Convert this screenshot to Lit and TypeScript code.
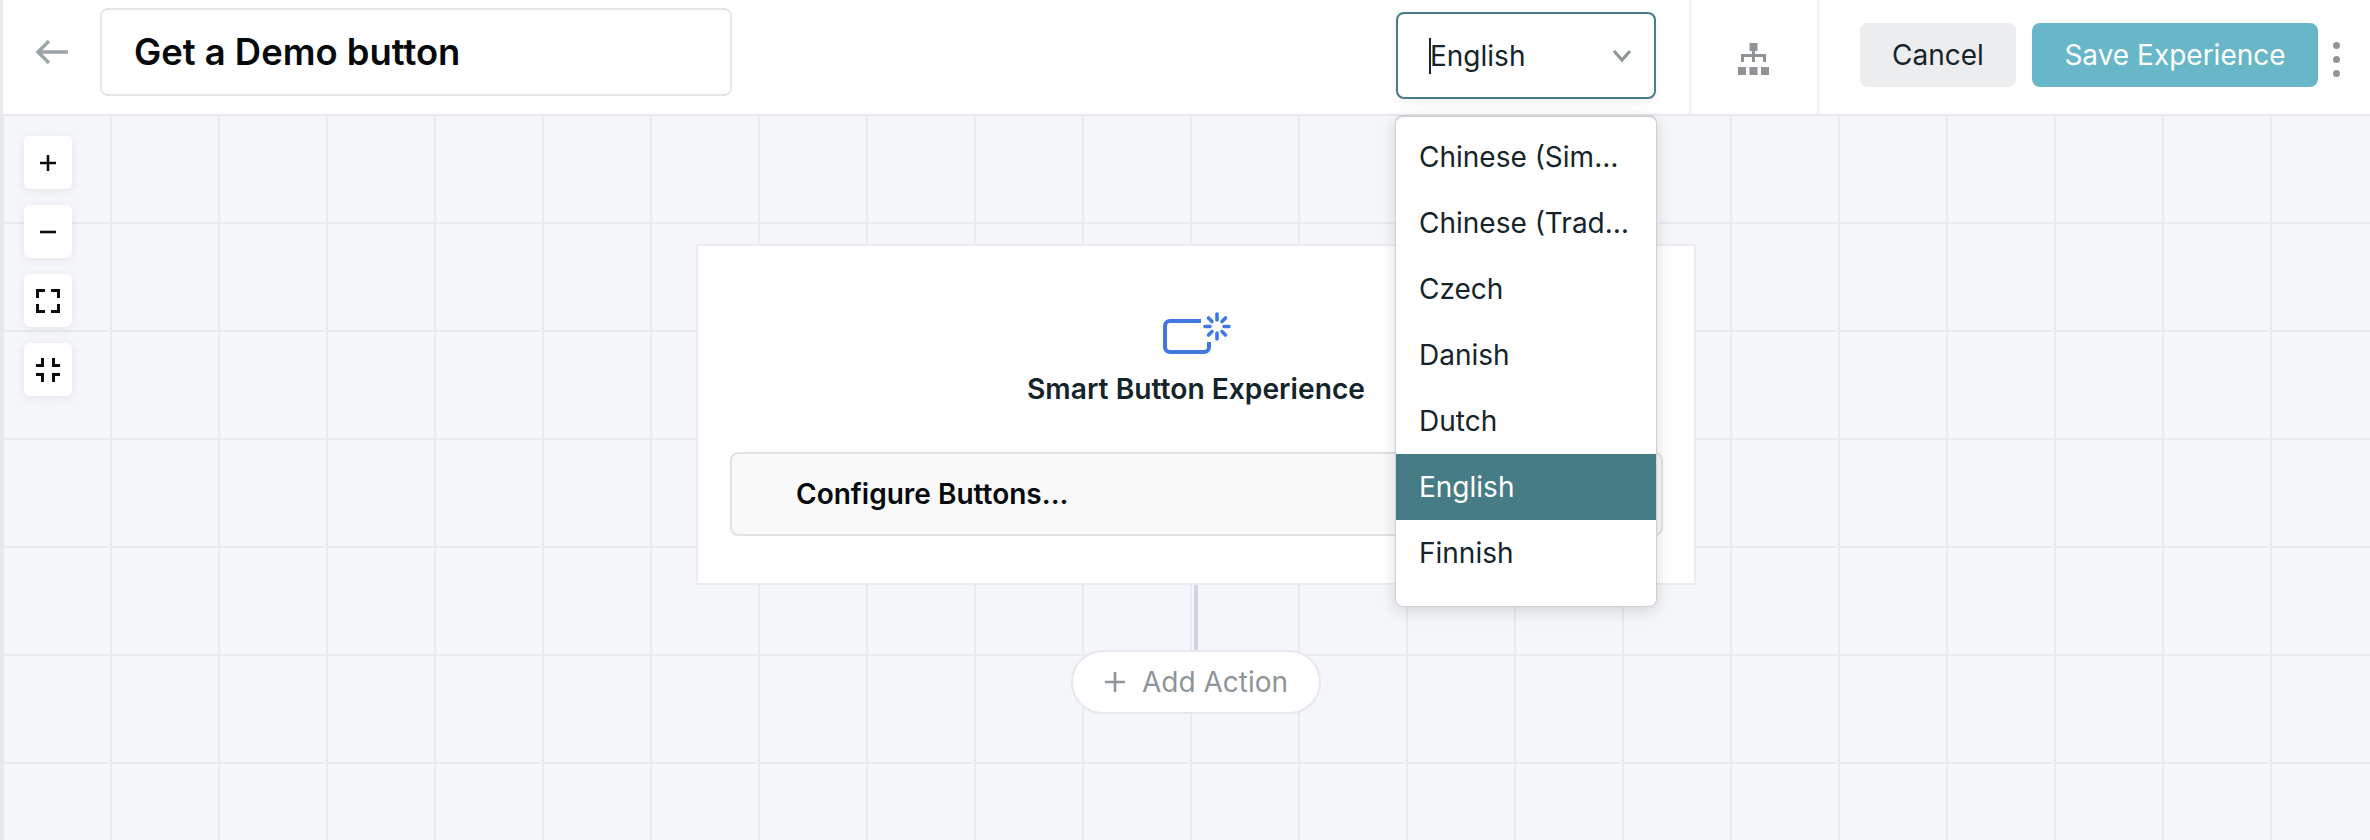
import { LitElement, html, css } from "lit";
import { customElement } from "lit/decorators.js";

const LANGS = ["Chinese (Simplified)", "Chinese (Traditional)", "Czech", "Danish", "Dutch", "English", "Finnish"];

@customElement("app-root")
export class AppRoot extends LitElement {
  static styles = css`
    :host { display: block; height: 840px; font-family: Inter, "Liberation Sans", sans-serif; color: #15242b; overflow: hidden; }
    * { box-sizing: border-box; }
    .page { position: relative; display: flex; flex-direction: column; height: 840px; border-left: 3px solid #e8e9ee; }
    .header { display: flex; align-items: stretch; height: 116px; flex: none; background: #fff; border-bottom: 2px solid #e8e9ee; }
    .left { display: flex; align-items: flex-start; flex: 1; padding-top: 8px; }
    .back { width: 97px; height: 88px; display: flex; align-items: center; padding-left: 32px; }
    .title { width: 632px; height: 88px; border: 2px solid #e4e6ea; border-radius: 8px; display: flex; align-items: center; padding-left: 32px; font-size: 36.4px; font-weight: 600; color: #05090c; }
    .lang { width: 260px; height: 87px; margin: 12px 33px 0 0; border: 2px solid #467c86; border-radius: 8px; display: flex; align-items: center; justify-content: space-between; padding: 0 22px 0 32px; font-size: 28px; box-shadow: 0 3px 8px rgba(0,0,0,.06); position: relative; }
    .lang-text { position: relative; }
    .caret { position: absolute; left: -1px; top: -1px; bottom: -1px; width: 2px; background: #15242b; }
    .tree-cell { width: 130px; border-left: 2px solid #eef0f2; border-right: 2px solid #eef0f2; display: flex; align-items: center; justify-content: center; padding-top: 4px; }
    .actions { display: flex; align-items: flex-start; padding: 23px 0 0 41px; width: 551px; }
    .btn { height: 64px; border-radius: 8px; display: flex; align-items: center; justify-content: center; font-size: 28px; white-space: nowrap; }
    .cancel { width: 156px; background: #ecedef; color: #15242b; margin-right: 16px; }
    .save { width: 286px; background: #67b7c8; color: #fff; }
    .dots { display: flex; flex-direction: column; gap: 7px; margin: 19px 0 0 15px; }
    .dots i { width: 7px; height: 7px; border-radius: 50%; background: #8f9699; }
    .canvas { position: relative; flex: 1; background-color: #f4f6fa;
      background-image: linear-gradient(to right, #e9ebf0 2px, transparent 2px), linear-gradient(to bottom, #e9ebf0 2px, transparent 2px);
      background-size: 108px 108px; background-position: -1px 106px; }
    .zoom { position: absolute; left: 21px; top: 20px; display: flex; flex-direction: column; gap: 16px; }
    .zoom div { width: 48px; height: 53px; background: #fff; border-radius: 6px; display: flex; align-items: center; justify-content: center; box-shadow: 0 2px 10px rgba(0,0,0,.07); }
    .card { position: absolute; left: 693px; top: 128px; width: 1000px; height: 341px; background: #fff; border: 2px solid #ebecf0; display: flex; flex-direction: column; align-items: center; padding: 66px 32px 0; }
    .icon { display: block; margin-left: 2px; }
    .card-title { font-size: 28.2px; font-weight: 600; margin-top: 18px; line-height: 34px; color: #15242b; }
    .config { align-self: stretch; height: 84px; margin-top: 46px; margin-right: -1px; background: #f9f9fa; border: 2px solid #e1e2e5; border-radius: 8px; display: flex; align-items: center; padding-left: 64px; font-size: 28px; font-weight: 600; color: #05090c; }
    .conn { position: absolute; left: 1191px; top: 469px; width: 4px; height: 66px; background: #d0d6e0; }
    .add { position: absolute; left: 1068px; top: 534px; width: 250px; height: 64px; border-radius: 32px; background: #fff; border: 2px solid #e6e8ec; display: flex; align-items: center; justify-content: center; gap: 16px; color: #8d9599; font-size: 28px; }
    .menu { position: absolute; left: 1392px; top: 115px; width: 262px; height: 492px; background: #fff; border: 1px solid #cfd0d2; border-top-width: 2px; border-radius: 8px; padding-top: 7px; box-shadow: 0 4px 16px rgba(0,0,0,.14); overflow: hidden; }
    .item { height: 66px; display: flex; align-items: center; padding-left: 23px; font-size: 28px; color: #15242b; }
    .item span { display: block; width: 214px; overflow: hidden; white-space: nowrap; text-overflow: ellipsis; }
    .item.sel { background: #467c86; color: #fff; }
  `;

  render() {
    return html`<div class="page">
      <div class="header">
        <div class="left">
          <div class="back"><svg width="34" height="26" viewBox="0 0 34 26" fill="none" stroke="#9ba5a6" stroke-width="3.4"><path d="M33 13H3M14 2L3 13l11 11"/></svg></div>
          <div class="title">Get a Demo button</div>
        </div>
        <div class="lang"><span class="lang-text"><i class="caret"></i>English</span>
          <svg width="20" height="14" viewBox="0 0 20 14" fill="none" stroke="#8f9699" stroke-width="3.2"><path d="M2 2l8 9 8-9"/></svg></div>
        <div class="tree-cell"><svg width="32" height="32" viewBox="0 0 32 32" fill="#8f9397">
          <rect x="11.5" y="0" width="8" height="8"/><rect x="14" y="8" width="3" height="5"/><rect x="3" y="11" width="25" height="3"/><rect x="3" y="11" width="3" height="8"/><rect x="14" y="11" width="3" height="8"/><rect x="25" y="11" width="3" height="8"/>
          <rect x="0" y="24" width="8" height="8"/><rect x="11.5" y="24" width="8" height="8"/><rect x="23" y="24" width="8" height="8"/></svg></div>
        <div class="actions">
          <div class="btn cancel">Cancel</div>
          <div class="btn save">Save Experience</div>
          <div class="dots"><i></i><i></i><i></i></div>
        </div>
      </div>
      <div class="canvas">
        <div class="zoom">
          <div><svg width="22" height="22" viewBox="0 0 22 22" fill="none" stroke="#0a0d10" stroke-width="2.6"><path d="M11 3v16M3 11h16"/></svg></div>
          <div><svg width="22" height="22" viewBox="0 0 22 22" fill="none" stroke="#0a0d10" stroke-width="2.6"><path d="M3 11h16"/></svg></div>
          <div><svg width="24" height="24" viewBox="0 0 24 24" fill="none" stroke="#0a0d10" stroke-width="3"><path d="M1.5 9V1.500H9M15 1.500h7.500V9M22.500 15v7.500H15M9 22.500H1.500V15"/></svg></div>
          <div><svg width="24" height="24" viewBox="0 0 24 24" fill="none" stroke="#0a0d10" stroke-width="3"><path d="M0 7.500h6.500V0M24 7.500h-6.500V0M0 16.500h6.500V24M24 16.500h-6.500V24"/></svg></div>
        </div>
        <div class="card">
          <svg class="icon" width="68" height="42" viewBox="0 0 68 42" fill="none" stroke="#3f78e0" stroke-linecap="round">
            <path d="M38 9H7a5 5 0 0 0-5 5v21a5 5 0 0 0 5 5h34a5 5 0 0 0 5-5v-5" stroke-width="4" stroke-linecap="butt"/>
            <path stroke-width="3.6" d="M54 2v6M54 21v6M42 14.500h5M61 14.500h5M45.500 6l3.500 3.500M59 19.500l3.500 3.500M62.500 6L59 9.500M49 19.500L45.500 23"/>
          </svg>
          <div class="card-title">Smart Button Experience</div>
          <div class="config">Configure Buttons...</div>
        </div>
        <div class="conn"></div>
        <div class="add">
          <svg width="22" height="22" viewBox="0 0 22 22" fill="none" stroke="#8d9599" stroke-width="2.6"><path d="M11 1v20M1 11h20"/></svg>
          <span>Add Action</span>
        </div>
      </div>
      <div class="menu">
        ${LANGS.map((l) => html`<div class="item ${l === "English" ? "sel" : ""}"><span>${l}</span></div>`)}
      </div>
    </div>`;
  }
}
